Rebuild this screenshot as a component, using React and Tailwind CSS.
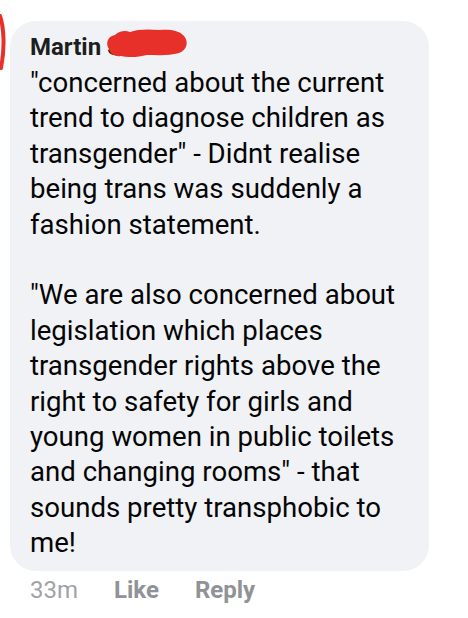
import React from "react";

const body1 = `"concerned about the current trend to diagnose children as transgender" - Didnt realise being trans was suddenly a fashion statement.`;
const body2 = `"We are also concerned about legislation which places transgender rights above the right to safety for girls and young women in public toilets and changing rooms" - that sounds pretty transphobic to me!`;

function Scribble() {
  // red marker scribble that hides the surname
  return (
    <svg
      className="absolute left-[-4px] top-[-6px]"
      width="86"
      height="32"
      viewBox="0 0 86 32"
    >
      <path
        d="M6 22 C2 16 5 9 12 8 C16 4 22 3 27 5 C34 2 46 2 56 3 C66 2 76 3 81 9 C86 15 84 23 76 26 C66 29 54 28 44 28 C36 30 26 31 18 29 C12 30 7 27 6 22 Z"
        fill="#e8302a"
      />
    </svg>
  );
}

export default function App() {
  return (
    <div className="relative min-h-[618px] bg-white pt-[21px] font-['Roboto','Liberation_Sans',sans-serif]">
      {/* stray red mark on the left edge */}
      <svg className="absolute left-0 top-[14px]" width="8" height="56" viewBox="0 0 8 56">
        <path d="M0 2 C4 14 5 34 1 54" stroke="#e8302a" strokeWidth="4" fill="none" strokeLinecap="round" />
      </svg>

      <div className="ml-[10px] w-[419px] rounded-[26px] bg-[#f0f2f5] pl-5 pr-2 pt-3 pb-[10px]">
        <div className="text-[24px] leading-[28px] font-bold text-[#1c1e21]">
          Martin{" "}
          <span className="relative inline-block">
            S<Scribble />
          </span>
        </div>
        <div className="mt-1 text-[27.6px] leading-[35.4px] text-[#050505]">
          <p>{body1}</p>
          <p className="mt-[35.4px]">{body2}</p>
        </div>
      </div>

      <div className="ml-[30px] mt-[5px] flex gap-9 text-[24px] leading-[28px] text-[#8f9296]">
        <span className="text-[#9fa2a6]">33m</span>
        <span className="font-bold">Like</span>
        <span className="font-bold">Reply</span>
      </div>
    </div>
  );
}
